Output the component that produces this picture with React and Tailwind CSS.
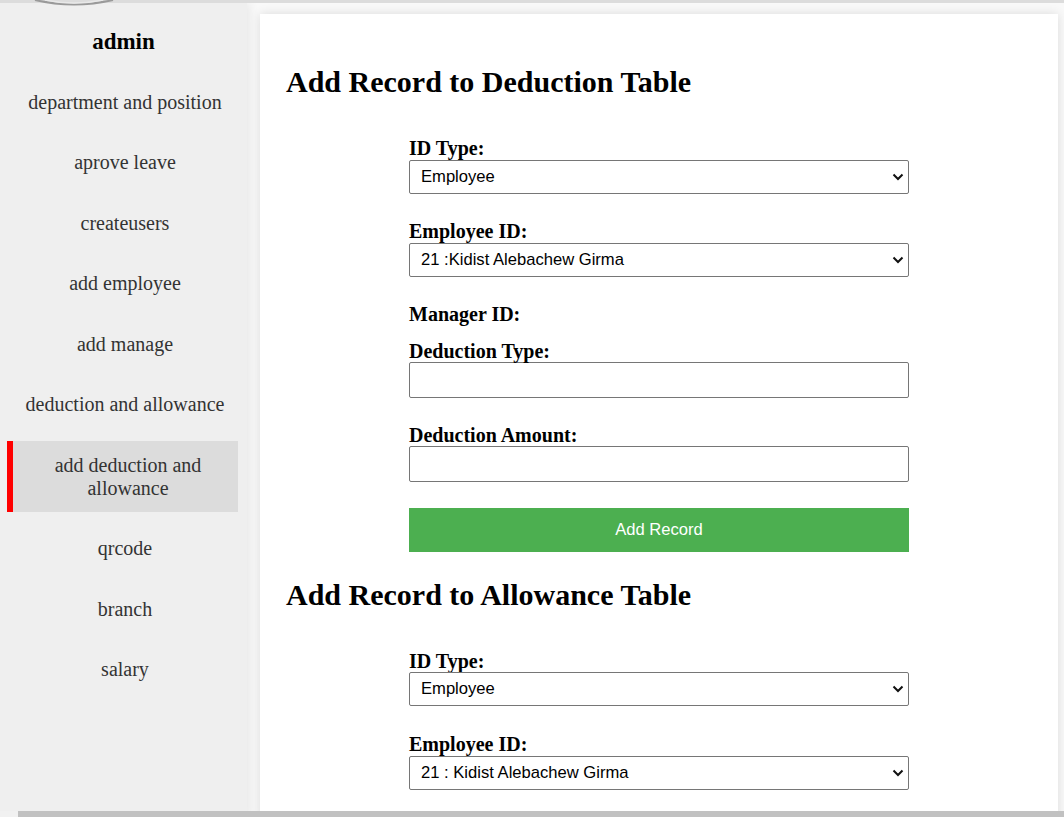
import React from "react";

const MENU = [
  "department and position",
  "aprove leave",
  "createusers",
  "add employee",
  "add manage",
  "deduction and allowance",
  "add deduction and allowance",
  "qrcode",
  "branch",
  "salary",
];

const serif = { fontFamily: '"Liberation Serif", "Times New Roman", serif' };

const Chevron = () => (
  <svg
    width="12"
    height="8"
    viewBox="0 0 12 8"
    className="absolute right-[5px] top-1/2 -translate-y-1/2 pointer-events-none"
  >
    <path d="M1.5 1.5 L6 6 L10.5 1.5" fill="none" stroke="#111" strokeWidth="2" />
  </svg>
);

const SelectBox = ({ value, className = "" }) => (
  <div className={`relative ${className}`}>
    <select
      defaultValue={value}
      className="w-full h-[34px] appearance-none border border-[#767676] rounded-[2px] bg-white pl-[11px] text-[16.6px] text-black font-['Liberation_Sans',Arial,sans-serif]"
    >
      <option>{value}</option>
    </select>
    <Chevron />
  </div>
);

const Label = ({ children, className = "" }) => (
  <label className={`block text-[20px] leading-[21px] font-bold text-black ${className}`} style={serif}>
    {children}
  </label>
);

const TextInput = () => (
  <input
    type="text"
    className="block w-full h-[36px] border border-[#767676] rounded-[2px] bg-white"
  />
);

const Sidebar = () => (
  <aside
    className="relative w-[247px] shrink-0 bg-[#efefef] shadow-[2px_0_10px_rgba(0,0,0,0.08)] z-10"
    style={serif}
  >
    <div className="pt-[26px] text-center text-[23px] font-bold text-black leading-[26px]">
      admin
    </div>
    <nav className="mt-[17px] flex flex-col">
      {MENU.map((item) => {
        const active = item === "add deduction and allowance";
        return (
          <div
            key={item}
            className={`ml-[7px] mr-[9px] my-[6.25px] pl-[16px] pr-[11px] py-[12.5px] text-center text-[20px] leading-[23px] text-[#333] ${
              active ? "bg-[#dcdcdc] border-l-[6px] border-[#ff0000]" : ""
            }`}
          >
            {active ? (
              <>
                add deduction and
                <br />
                allowance
              </>
            ) : (
              item
            )}
          </div>
        );
      })}
    </nav>
  </aside>
);

const App = () => {
  return (
    <div className="relative h-[817px] w-[1064px] overflow-hidden bg-white">
      {/* top strip with logo edge */}
      <div className="relative h-[3px] bg-[#dcdcdc] z-20">
        <svg width="140" height="8" className="absolute left-0 top-0">
          <path d="M35 0 Q74 9 113 0" fill="none" stroke="#9a9a9a" strokeWidth="2" />
          <path d="M45 0 Q74 6 103 0" fill="none" stroke="#e8e8e8" strokeWidth="1.5" />
        </svg>
      </div>

      <div className="flex h-[814px]">
        <Sidebar />

        <main className="flex-1 bg-[#f9f9f9] pt-[11px] pl-[13px] pr-[6px]">
          <div className="bg-white h-[820px] shadow-[0_0_10px_rgba(0,0,0,0.12)] pt-[51px] px-[26px]">
            <h2 className="text-[30px] leading-[34px] font-bold text-black" style={serif}>
              Add Record to Deduction Table
            </h2>

            <form className="w-[500px] mx-auto" onSubmit={(e) => e.preventDefault()}>
              <Label className="mt-[39px]">ID Type:</Label>
              <SelectBox value="Employee" className="mt-[1px]" />

              <Label className="mt-[27px]">Employee ID:</Label>
              <SelectBox value="21 :Kidist Alebachew Girma" className="mt-[1px]" />

              <Label className="mt-[27px]">Manager ID:</Label>

              <Label className="mt-[16px]">Deduction Type:</Label>
              <TextInput />

              <Label className="mt-[27px]">Deduction Amount:</Label>
              <TextInput />

              <button
                type="submit"
                className="mt-[26px] w-full h-[44px] bg-[#4caf50] text-white text-[16.6px] font-['Liberation_Sans',Arial,sans-serif]"
              >
                Add Record
              </button>
            </form>

            <h2 className="mt-[26px] text-[30px] leading-[34px] font-bold text-black" style={serif}>
              Add Record to Allowance Table
            </h2>

            <form className="w-[500px] mx-auto" onSubmit={(e) => e.preventDefault()}>
              <Label className="mt-[39px]">ID Type:</Label>
              <SelectBox value="Employee" />

              <Label className="mt-[28px]">Employee ID:</Label>
              <SelectBox value="21 : Kidist Alebachew Girma" className="mt-[1px]" />
            </form>
          </div>
        </main>
      </div>

      {/* horizontal scrollbar */}
      <div className="absolute left-0 right-0 bottom-0 h-[6px] bg-[#f1f1f1] z-30">
        <div className="ml-[18px] h-full bg-[#c1c1c1]" />
      </div>
    </div>
  );
};

export default App;
